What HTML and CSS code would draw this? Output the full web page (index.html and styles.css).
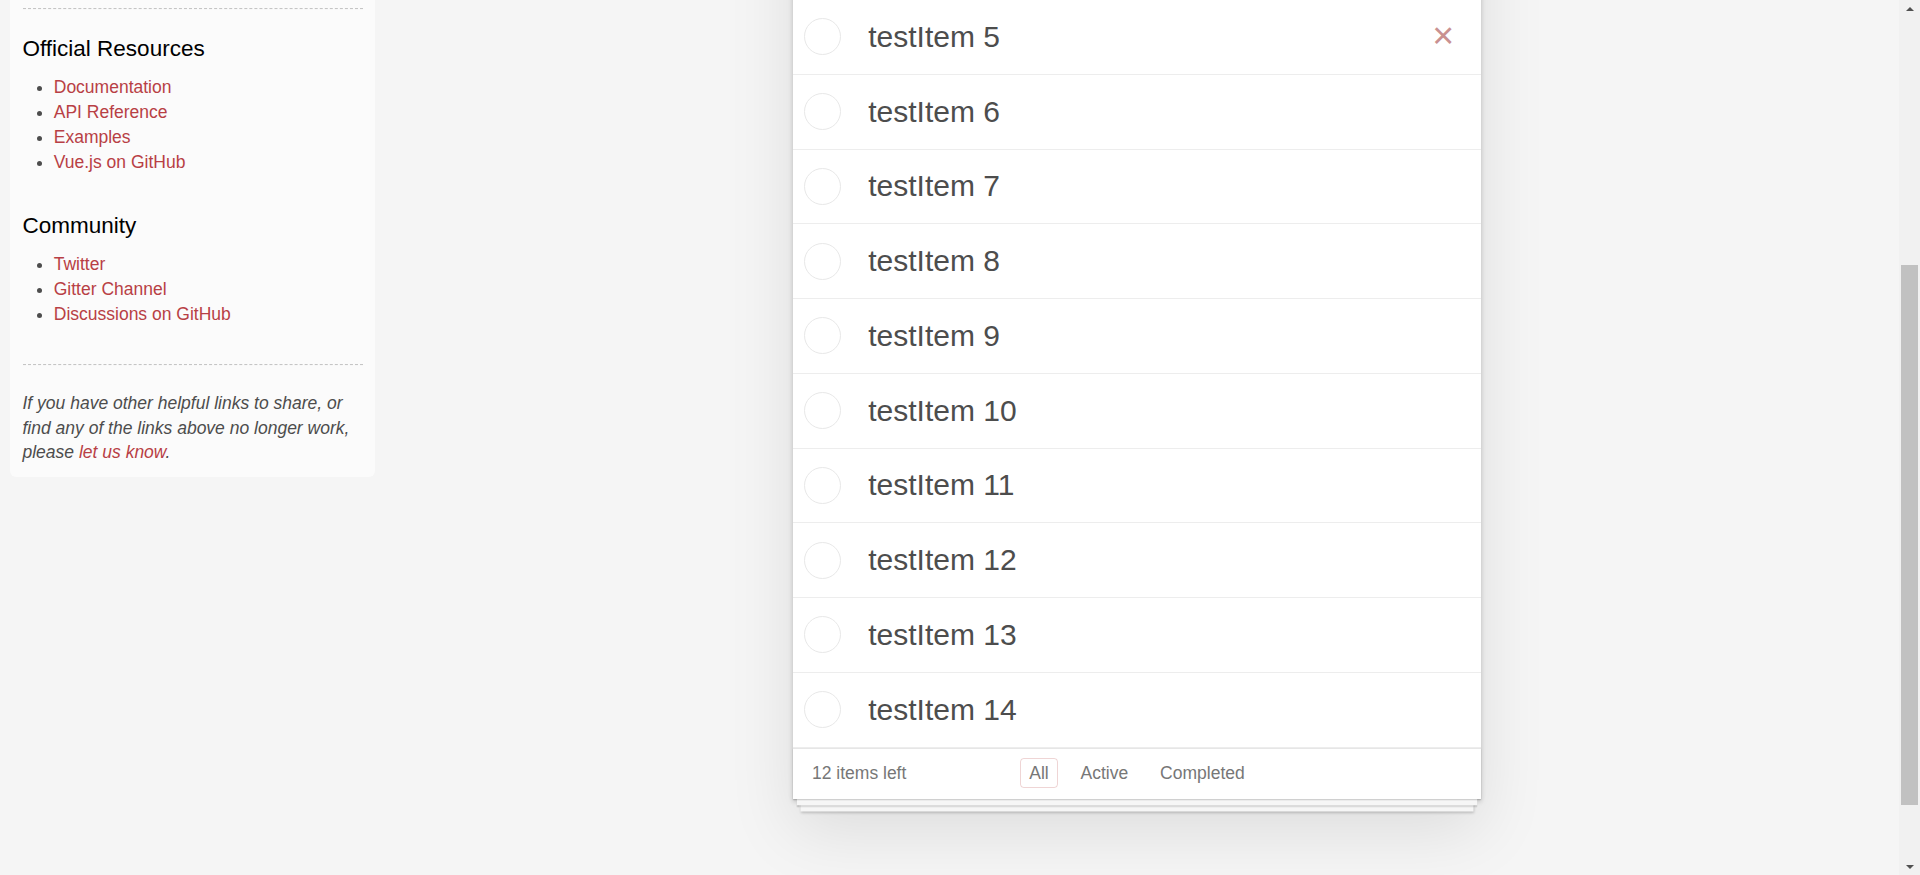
FILE: index.html
```html
<!DOCTYPE html>
<html lang="en">
<head>
<meta charset="utf-8">
<title>Vue.js • TodoMVC</title>
<link rel="stylesheet" href="styles.css">
</head>
<body>
<div class="page">
  <aside class="learn">
    <div class="learn-intro">
      <header>
        <h3>Vue.js</h3>
        <span class="source-links">
          <h5>Example</h5>
          <a href="#">Source</a>
        </span>
      </header>
      <hr>
      <blockquote class="quote">
        <p>Vue.js is a library for building interactive web interfaces. It provides data-driven, nestable view components with a simple and flexible API.</p>
        <footer><a href="#">Vue.js</a></footer>
      </blockquote>
    </div>
    <hr>
    <h4>Official Resources</h4>
    <ul>
      <li><a href="#">Documentation</a></li>
      <li><a href="#">API Reference</a></li>
      <li><a href="#">Examples</a></li>
      <li><a href="#">Vue.js on GitHub</a></li>
    </ul>
    <h4>Community</h4>
    <ul>
      <li><a href="#">Twitter</a></li>
      <li><a href="#">Gitter Channel</a></li>
      <li><a href="#">Discussions on GitHub</a></li>
    </ul>
    <footer class="learn-footer">
      <hr>
      <em>If you have other helpful links to share, or find any of the links above no longer work, please <a href="#">let us know</a>.</em>
    </footer>
  </aside>

  <main class="main-col">
    <h1 class="title">todos</h1>
    <section class="todoapp">
      <header class="header">
        <input class="new-todo" placeholder="What needs to be done?">
      </header>
      <section class="main">
        <ul class="todo-list">
          <li class="todo"><input type="checkbox" class="toggle"><label>testItem 3</label><button class="destroy">×</button></li>
          <li class="todo"><input type="checkbox" class="toggle"><label>testItem 4</label><button class="destroy">×</button></li>
          <li class="todo hovered"><input type="checkbox" class="toggle"><label>testItem 5</label><button class="destroy">×</button></li>
          <li class="todo"><input type="checkbox" class="toggle"><label>testItem 6</label><button class="destroy">×</button></li>
          <li class="todo"><input type="checkbox" class="toggle"><label>testItem 7</label><button class="destroy">×</button></li>
          <li class="todo"><input type="checkbox" class="toggle"><label>testItem 8</label><button class="destroy">×</button></li>
          <li class="todo"><input type="checkbox" class="toggle"><label>testItem 9</label><button class="destroy">×</button></li>
          <li class="todo"><input type="checkbox" class="toggle"><label>testItem 10</label><button class="destroy">×</button></li>
          <li class="todo"><input type="checkbox" class="toggle"><label>testItem 11</label><button class="destroy">×</button></li>
          <li class="todo"><input type="checkbox" class="toggle"><label>testItem 12</label><button class="destroy">×</button></li>
          <li class="todo"><input type="checkbox" class="toggle"><label>testItem 13</label><button class="destroy">×</button></li>
          <li class="todo"><input type="checkbox" class="toggle"><label>testItem 14</label><button class="destroy">×</button></li>
        </ul>
      </section>
      <footer class="footer">
        <span class="todo-count"><strong>12</strong> items left</span>
        <ul class="filters">
          <li><a href="#/all" class="selected">All</a></li>
          <li><a href="#/active">Active</a></li>
          <li><a href="#/completed">Completed</a></li>
        </ul>
        <span class="spacer"></span>
      </footer>
    </section>
    <footer class="info">
      <p>Double-click to edit a todo</p>
      <p>Written by <a href="#">Evan You</a></p>
      <p>Part of <a href="#">TodoMVC</a></p>
    </footer>
  </main>
</div>
<div class="scrollbar" aria-hidden="true">
  <span class="sb-button"><span class="sb-arrow up"></span></span>
  <span class="sb-thumb"></span>
  <span class="sb-button bottom"><span class="sb-arrow down"></span></span>
</div>
<script src="script.js"></script>
</body>
</html>
```

FILE: styles.css
```css
html {
  background: #f5f5f5;
}

body {
  margin: 0;
  font-family: "Liberation Sans", Arial, Helvetica, sans-serif;
  font-size: 17.5px;
  line-height: 24.5px;
  color: #4d4d4d;
  background: #f5f5f5;
}

.page {
  display: flex;
  align-items: flex-start;
  margin-right: 21px;
}

/* ---------- learn sidebar ---------- */
.learn {
  flex: none;
  width: 365px;
  box-sizing: border-box;
  margin: 10px 0 0 10px;
  padding: 12.5px;
  border-radius: 6.25px;
  background: rgba(255, 255, 255, 0.6);
}

.learn-intro {
  height: 355.5px;
  overflow: hidden;
}

.learn-intro h3 {
  margin: 12.5px 0;
  font-size: 30px;
  font-weight: normal;
  line-height: 1.2;
  color: #000;
}

.learn-intro h5 {
  margin: 12.5px 0 0;
  font-size: 17.5px;
  font-weight: normal;
  color: #000;
}

.quote {
  margin: 25px 0;
  padding: 12.5px;
  border-radius: 6.25px;
  background: rgba(0, 0, 0, 0.04);
}

.quote p {
  margin: 0;
  font-style: italic;
  line-height: 1.3;
  font-size: 18.75px;
}

.quote footer {
  text-align: right;
  margin-top: 12.5px;
}

.learn hr {
  margin: 25px 0;
  height: 0;
  border: 0;
  border-top: 1px dashed #c5c5c5;
  border-bottom: 1px dashed #f7f7f7;
}

.learn h4 {
  margin: 12.5px 0;
  font-size: 22.5px;
  font-weight: normal;
  line-height: 1.2;
  color: #000;
}

.learn ul {
  margin: 0 0 37.5px 31.25px;
  padding: 0;
}

.learn li {
  line-height: 25px;
}

.learn a {
  color: #b83f45;
  text-decoration: none;
  font-weight: normal;
}

.learn-footer em {
  font-style: italic;
  color: #4d4d4d;
}

/* ---------- main column ---------- */
.main-col {
  flex: 1;
  min-width: 0;
}

.title {
  margin: 0;
  height: 162.5px;
  line-height: 150px;
  font-size: 100px;
  font-weight: 100;
  text-align: center;
  color: #b83f45;
  overflow: hidden;
}

.todoapp {
  width: 687.5px;
  margin: 0 auto;
  background: #fff;
  box-shadow: 0 2.5px 5px 0 rgba(0, 0, 0, 0.2), 0 31.25px 62.5px 0 rgba(0, 0, 0, 0.1);
}

.new-todo {
  display: block;
  width: 100%;
  height: 82px;
  box-sizing: border-box;
  margin: 0;
  padding: 20px 20px 20px 75px;
  border: none;
  background: rgba(0, 0, 0, 0.003);
  box-shadow: inset 0 -2.5px 1.25px rgba(0, 0, 0, 0.03);
  font-family: inherit;
  font-size: 30px;
  line-height: 42px;
  color: inherit;
  outline: none;
}

.new-todo::placeholder {
  font-style: italic;
  font-weight: 300;
  color: #e6e6e6;
}

.main {
  border-top: 1px solid #e6e6e6;
}

.todo-list {
  margin: 0;
  padding: 0;
  list-style: none;
}

.todo {
  display: flex;
  align-items: center;
  border-bottom: 1px solid #ededed;
  font-size: 30px;
}

.toggle {
  -webkit-appearance: none;
  appearance: none;
  flex: none;
  width: 37px;
  height: 37px;
  box-sizing: border-box;
  margin: 0 0 0 10.5px;
  border: 1px solid #e8e8e8;
  border-radius: 50%;
  background: #fff;
}

.todo label {
  flex: 1;
  min-width: 0;
  padding: 18.875px 18.75px 18.875px 27.5px;
  line-height: 36px;
  color: #4d4d4d;
  word-break: break-all;
}

.destroy {
  display: none;
  flex: none;
  width: 50px;
  height: 50px;
  margin: 0 12.5px 4px 0;
  padding: 0;
  border: 0;
  background: none;
  font-family: inherit;
  font-size: 37.5px;
  line-height: 50px;
  color: #c99191;
  text-align: center;
}

.todo.hovered .destroy {
  display: block;
}

/* ---------- footer ---------- */
.footer {
  display: grid;
  grid-template-columns: 1fr auto 1fr;
  align-items: start;
  height: 25px;
  padding: 12.5px 18.75px;
  border-top: 1px solid #e6e6e6;
  color: #777;
  font-size: 17.5px;
  line-height: 24.5px;
  box-shadow:
    0 1.25px 1.25px rgba(0, 0, 0, 0.2),
    0 10px 0 -3.75px #f6f6f6,
    0 11.25px 1.25px -3.75px rgba(0, 0, 0, 0.2),
    0 20px 0 -7.5px #f6f6f6,
    0 21.25px 2.5px -7.5px rgba(0, 0, 0, 0.2);
}

.todo-count strong {
  font-weight: normal;
}

.filters {
  margin: 0;
  padding: 0;
  list-style: none;
  white-space: nowrap;
}

.filters li {
  display: inline;
}

.filters a {
  margin: 3.75px;
  padding: 3.75px 8.75px;
  color: inherit;
  text-decoration: none;
  border: 1px solid transparent;
  border-radius: 3.75px;
}

.filters a.selected {
  border-color: rgba(175, 47, 47, 0.2);
}

/* ---------- info ---------- */
.info {
  margin: 81px auto 0;
  color: #bfbfbf;
  font-size: 13.75px;
  line-height: 1;
  text-align: center;
  text-shadow: 0 1px 0 rgba(255, 255, 255, 0.5);
}

.info p {
  margin: 13.75px 0;
}

.info a {
  color: inherit;
  text-decoration: none;
}

/* ---------- window scrollbar (browser chrome) ---------- */
.scrollbar {
  position: fixed;
  top: 0;
  right: 0;
  bottom: 0;
  width: 21px;
  background: #f1f1f1;
  display: flex;
  flex-direction: column;
  align-items: center;
}

.sb-button {
  flex: none;
  width: 21px;
  height: 17px;
  display: flex;
  align-items: center;
  justify-content: center;
}

.sb-button.bottom {
  margin-top: auto;
}

.sb-arrow {
  width: 0;
  height: 0;
  border-left: 4.5px solid transparent;
  border-right: 4.5px solid transparent;
}

.sb-arrow.up {
  border-bottom: 4.5px solid #505050;
}

.sb-arrow.down {
  border-top: 4.5px solid #505050;
}

.sb-thumb {
  flex: none;
  width: 17px;
  height: 540px;
  margin-top: 248px;
  background: #c1c1c1;
}
```

FILE: script.js
```js
function place() {
  window.scrollTo(0, 395);
}
place();
window.addEventListener('load', place);
```
